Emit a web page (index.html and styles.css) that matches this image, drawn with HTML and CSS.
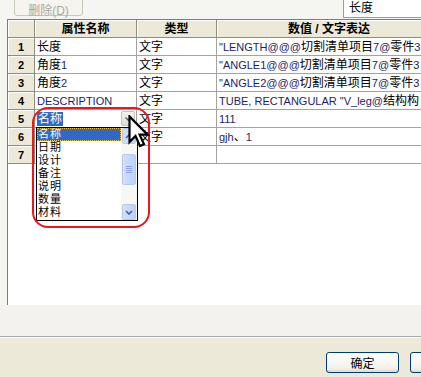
FILE: index.html
```html
<!doctype html>
<html>
<head>
<meta charset="utf-8">
<link rel="stylesheet" href="styles.css">
</head>
<body>
<div class="dialog">
	<div class="toolbar">
		<button class="btnDisabled" disabled>删除(D)</button>
		<div class="valueBox">长度</div>
	</div>

	<div class="gridFrame">
		<table class="grid">
			<colgroup>
				<col class="cNum"><col class="cName"><col class="cType"><col class="cValue">
			</colgroup>
			<tr class="head">
				<th></th><th>属性名称</th><th>类型</th><th>数值 / 文字表达</th>
			</tr>
			<tr>
				<th class="num">1</th><td>长度</td><td>文字</td>
				<td><span class="en">"LENGTH@@@</span>切割清单项目<span class="en">7@</span>零件<span class="en">3</span></td>
			</tr>
			<tr>
				<th class="num">2</th><td>角度<span class="en">1</span></td><td>文字</td>
				<td><span class="en">"ANGLE1@@@</span>切割清单项目<span class="en">7@</span>零件<span class="en">3</span></td>
			</tr>
			<tr>
				<th class="num">3</th><td>角度<span class="en">2</span></td><td>文字</td>
				<td><span class="en">"ANGLE2@@@</span>切割清单项目<span class="en">7@</span>零件<span class="en">3</span></td>
			</tr>
			<tr>
				<th class="num">4</th><td><span class="en">DESCRIPTION</span></td><td>文字</td>
				<td><span class="en">TUBE, RECTANGULAR "V_leg@</span>结构构</td>
			</tr>
			<tr>
				<th class="num">5</th>
				<td class="editCell">
					<div class="combo">
						<span class="comboText">名称</span>
						<span class="comboBtn">
							<svg width="7" height="4" viewBox="0 0 7 4"><path d="M0.5 0.5 L3.5 3.5 L6.5 0.5" fill="none" stroke="#4d6185" stroke-width="1.4"/></svg>
						</span>
						<div class="dropList">
							<div class="items">
								<div class="item selected">名称</div>
								<div class="item">日期</div>
								<div class="item">设计</div>
								<div class="item">备注</div>
								<div class="item">说明</div>
								<div class="item">数量</div>
								<div class="item">材料</div>
							</div>
							<div class="scrollBar">
								<div class="sbBtn">
									<svg width="8" height="5" viewBox="0 0 8 5"><path d="M1 4 L4 1 L7 4" fill="none" stroke="#4d6185" stroke-width="1.6"/></svg>
								</div>
								<div class="sbThumb"><i></i><i></i><i></i><i></i></div>
								<div class="sbBtn sbDown">
									<svg width="8" height="5" viewBox="0 0 8 5"><path d="M1 1 L4 4 L7 1" fill="none" stroke="#4d6185" stroke-width="1.6"/></svg>
								</div>
							</div>
						</div>
					</div>
				</td>
				<td>文字</td>
				<td><span class="en">111</span></td>
			</tr>
			<tr>
				<th class="num">6</th><td></td><td>文字</td>
				<td><span class="en">gjh</span>、<span class="en">1</span></td>
			</tr>
			<tr>
				<th class="num">7</th><td></td><td></td><td></td>
			</tr>
		</table>
	</div>

	<div class="band"></div>

	<div class="footer">
		<button class="xpBtn">确定</button>
		<button class="xpBtn"></button>
	</div>

	<!-- annotation and mouse pointer drawn over the grid -->
	<div class="markRing"></div>
	<svg class="pointer" width="22" height="33" viewBox="0 0 22 33">
		<path d="M1.5 1.5 L1.5 27 L7.5 21 L12 31 L16 29.2 L11.6 19.6 L19.5 19.6 Z" fill="#fff" stroke="#000" stroke-width="2.2" stroke-linejoin="miter"/>
	</svg>
</div>
</body>
</html>
```

FILE: styles.css
```css
* {
	box-sizing: border-box;
}
html, body {
	margin: 0;
	padding: 0;
}
body {
	width: 421px;
	height: 377px;
	overflow: hidden;
	background-color: #f5f5f1;
	font-family: "Liberation Sans", "Noto Sans CJK SC", sans-serif;
	font-size: 12px;
	color: #000;
}
.dialog {
	position: relative;
	height: 377px;
}

/* top strip */
.toolbar {
	display: flex;
	align-items: flex-start;
	height: 19px;
}
.btnDisabled {
	margin: -4px 0 0 14px;
	width: 69px;
	height: 20px;
	padding: 4px 0 0;
	border: 1px solid #cac8bb;
	border-radius: 3px;
	background: #f5f4ee;
	color: #aca899;
	font-family: "Liberation Sans", "Noto Sans CJK SC", sans-serif;
	font-size: 12px;
}
.valueBox {
	margin-left: auto;
	margin-right: -12px;
	width: 90px;
	height: 18px;
	padding-left: 5px;
	border: 1px solid #8c9fb6;
	border-top: none;
	background: #fff;
	line-height: 16px;
}

/* grid */
.gridFrame {
	margin: 0 -30px 0 7px;
	height: 286px;
	border-top: 1px solid #7d7d7d;
	border-left: 1px solid #7d7d7d;
	background: #fff;
	overflow: hidden;
}
.grid {
	table-layout: fixed;
	width: 434px;
	border-collapse: separate;
	border-spacing: 0;
}
.cNum { width: 27px; }
.cName { width: 102px; }
.cType { width: 80px; }
.cValue { width: 225px; }
.grid th, .grid td {
	height: 18px;
	padding: 0 0 0 2px;
	white-space: nowrap;
	overflow: visible;
	text-align: left;
	font-weight: normal;
	line-height: 16px;
	border-right: 1px solid #a3a3a3;
	border-bottom: 1px solid #a3a3a3;
}
.grid .head th {
	background: #ece9d8;
	text-align: center;
	font-weight: bold;
	padding: 0;
	border-right: 1px solid #8f8d82;
	border-bottom: 1px solid #8f8d82;
	box-shadow: inset 1px 1px #fff;
}
.grid th.num {
	background: #ece9d8;
	text-align: center;
	font-weight: bold;
	font-size: 11px;
	padding: 0;
	border-right: 1px solid #8f8d82;
	border-bottom: 1px solid #8f8d82;
	box-shadow: inset 1px 1px #fff;
}
.grid td {
	overflow: hidden;
}
.en {
	font-size: 11px;
	color: #1e1e62;
}

/* cell editor with open list */
.grid td.editCell {
	padding: 0;
	overflow: visible;
}
.combo {
	position: relative;
	display: flex;
	align-items: center;
	height: 17px;
	padding-left: 2px;
}
.comboText {
	background: #316ac5;
	color: #fff;
	line-height: 14px;
	padding: 0 1px;
}
.comboBtn {
	margin-left: auto;
	margin-right: 1px;
	width: 14px;
	height: 15px;
	display: flex;
	align-items: center;
	justify-content: center;
	border: 1px solid #c3c3be;
	border-radius: 2px;
	background: linear-gradient(#f3f3ef, #dcdcd4);
}
.dropList {
	position: absolute;
	left: 1px;
	top: 17px;
	width: 102px;
	height: 94px;
	display: flex;
	border: 1px solid #000;
	background: #fff;
	z-index: 2;
}
.items {
	flex: 1;
}
.item {
	height: 13px;
	line-height: 13px;
	padding-left: 1px;
	font-size: 11px;
	letter-spacing: 1px;
}
.item.selected {
	background: #316ac5;
	color: #fff;
	outline: 1px dotted #f0c040;
	outline-offset: -1px;
}
.scrollBar {
	width: 16px;
	display: flex;
	flex-direction: column;
	background: #f7f7f3;
}
.sbBtn, .sbThumb {
	height: 16px;
	margin: 0 1px;
	display: flex;
	align-items: center;
	justify-content: center;
	border: 1px solid #b7c9f3;
	border-radius: 2px;
	background: linear-gradient(90deg, #d3e0fd, #bccffa);
}
.sbThumb {
	height: 31px;
	margin-top: 10px;
	flex-direction: column;
	gap: 1px;
}
.sbThumb i {
	display: block;
	width: 6px;
	height: 1px;
	background: #8aa6e6;
}
.sbDown {
	margin-top: auto;
}

/* lower part of the dialog */
.band {
	height: 32px;
	background: #f3f2ee;
	border-bottom: 1px solid #a3abb0;
}
.footer {
	display: flex;
	justify-content: flex-end;
	gap: 11px;
	margin-right: -62px;
	height: 40px;
	padding-top: 14px;
	background: #ece9d8;
	border-top: 1px solid #fbfbf8;
}
.xpBtn {
	width: 73px;
	height: 21px;
	padding: 0;
	border: 1px solid #003c74;
	border-radius: 3px;
	background: linear-gradient(#ffffff, #f2f1ea 80%, #dedbcd);
	font-family: "Noto Sans CJK SC", sans-serif;
	font-size: 12px;
	color: #000;
}

.markRing {
	position: absolute;
	left: 32px;
	top: 107px;
	width: 118px;
	height: 121px;
	border: 2px solid #f0141e;
	border-radius: 16px;
	z-index: 3;
}
.pointer {
	position: absolute;
	left: 128px;
	top: 115px;
	z-index: 4;
}
```
